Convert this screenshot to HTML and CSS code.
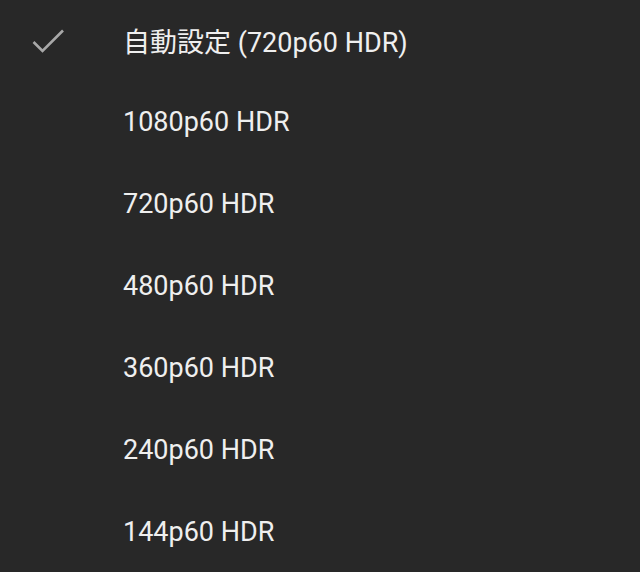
FILE: index.html
```html
<!DOCTYPE html>
<html lang="ja">
<head>
<meta charset="utf-8">
<link rel="stylesheet" href="styles.css">
</head>
<body>
<ul class="menu">
  <li class="item selected">
    <span class="check"><svg width="34" height="28" viewBox="0 0 34 28"><path d="M1.5 15 L10.5 24 L31 3.5" fill="none" stroke="#a8a8a8" stroke-width="2.6"/></svg></span>
    <span class="label">自動設定 (720p60 HDR)</span>
  </li>
  <li class="item"><span class="check"></span><span class="label">1080p60 HDR</span></li>
  <li class="item"><span class="check"></span><span class="label">720p60 HDR</span></li>
  <li class="item"><span class="check"></span><span class="label">480p60 HDR</span></li>
  <li class="item"><span class="check"></span><span class="label">360p60 HDR</span></li>
  <li class="item"><span class="check"></span><span class="label">240p60 HDR</span></li>
  <li class="item"><span class="check"></span><span class="label">144p60 HDR</span></li>
</ul>
</body>
</html>
```
FILE: styles.css
```css
html, body {
  margin: 0;
  padding: 0;
  background: #282828;
  height: 100%;
}
.menu {
  list-style: none;
  margin: -1px 0 0 0;
  padding: 0;
  font-family: Roboto, "Noto Sans CJK JP", sans-serif;
  font-size: 27px;
  color: #efefef;
}
.item {
  height: 82px;
  display: flex;
  align-items: center;
}
.check {
  width: 123px;
  flex: none;
  display: flex;
  align-items: center;
  padding-left: 32px;
  box-sizing: border-box;
}
.check svg { display: block; margin-top: 2px; }
.label {
  white-space: nowrap;
}
```
